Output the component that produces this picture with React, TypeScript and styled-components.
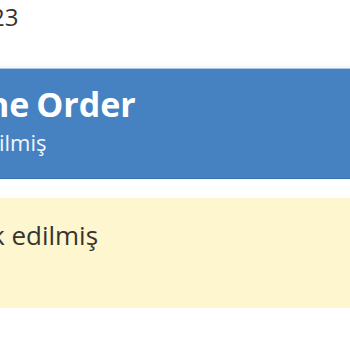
import React from "react";
import styled, { createGlobalStyle } from "styled-components";

const GlobalStyle = createGlobalStyle`
  html, body {
    margin: 0;
    padding: 0;
    background: #ffffff;
    overflow: hidden;
  }
  body {
    font-family: "Open Sans", "Noto Sans", sans-serif;
  }
`;

const Page = styled.div`
  display: flex;
  flex-direction: column;
  width: 350px;
  height: 350px;
  overflow: hidden;
`;

const Line = styled.div<{ $shift: number }>`
  margin-left: ${(p) => p.$shift}px;
  white-space: nowrap;
`;

const DateText = styled(Line)`
  font-size: 24px;
  color: #333333;
  height: 62px;
`;

const Shade = styled.div`
  height: 6px;
  background: linear-gradient(to bottom, rgba(0, 0, 0, 0), rgba(0, 0, 0, 0.035));
`;

const Banner = styled.section`
  display: flex;
  flex-direction: column;
  background: #4682c2;
  border-top: 1px solid #a8c9e7;
  border-bottom: 1px solid #3b73b0;
  padding: 13px 0 0;
  box-sizing: border-box;
  height: 111px;
`;

const Title = styled(Line)`
  font-size: 34px;
  line-height: 45px;
  font-weight: 700;
  word-spacing: -2px;
  color: #ffffff;
`;

const Subtitle = styled(Line)`
  font-size: 22px;
  color: #f2f6fb;
`;

const Gap = styled.div`
  height: 19px;
  border-top: 1px solid #f2fbfb;
  box-sizing: border-box;
`;

const Notice = styled.section`
  display: flex;
  flex-direction: column;
  background: #fdf6cf;
  padding-top: 19px;
  box-sizing: border-box;
  height: 110px;
`;

const NoticeText = styled(Line)`
  font-size: 26px;
  color: #363431;
`;

export default function App() {
  return (
    <>
      <GlobalStyle />
      <Page>
        <DateText $shift={-9}>23</DateText>
        <Shade />
        <Banner>
          <Title $shift={-13}>ne Order</Title>
          <Subtitle $shift={-1}>ilmiş</Subtitle>
        </Banner>
        <Gap />
        <Notice>
          <NoticeText $shift={-9}>k edilmiş</NoticeText>
        </Notice>
      </Page>
    </>
  );
}
